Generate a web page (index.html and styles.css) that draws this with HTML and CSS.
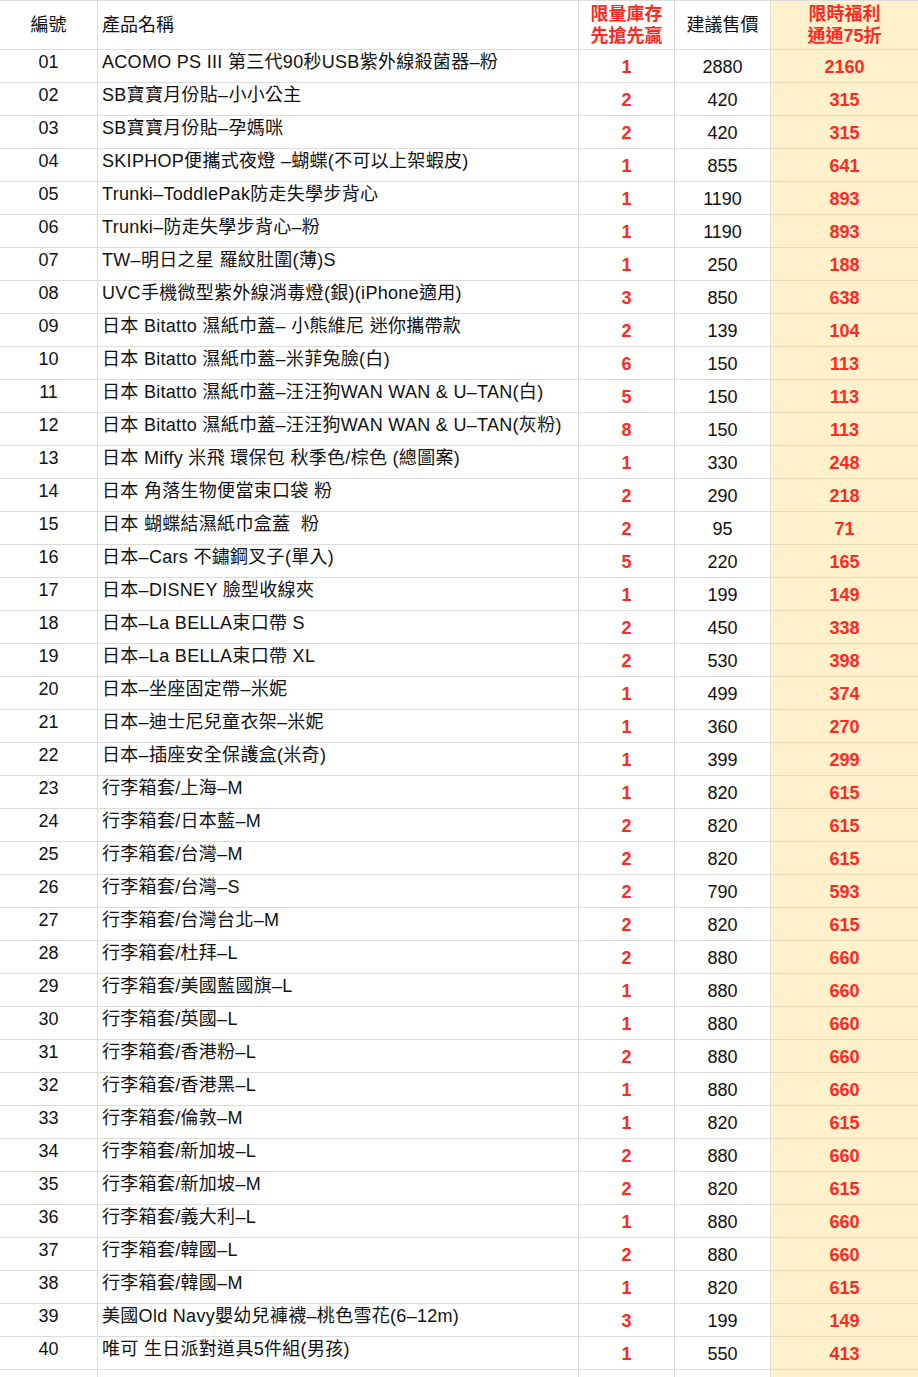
FILE: index.html
```html
<!DOCTYPE html>
<html lang="zh-Hant">
<head>
<meta charset="utf-8">
<title>限時福利</title>
<link rel="stylesheet" href="styles.css">
</head>
<body>
<div class="sheet">
  <div class="row head">
    <div class="c id">編號</div>
    <div class="c name">產品名稱</div>
    <div class="c qty hot">限量庫存<br>先搶先贏</div>
    <div class="c price">建議售價</div>
    <div class="c deal hot">限時福利<br>通通75折</div>
  </div>
  <div class="row"><div class="c id">01</div><div class="c name">ACOMO PS III 第三代90秒USB紫外線殺菌器–粉</div><div class="c qty">1</div><div class="c price">2880</div><div class="c deal">2160</div></div>
  <div class="row"><div class="c id">02</div><div class="c name">SB寶寶月份貼–小小公主</div><div class="c qty">2</div><div class="c price">420</div><div class="c deal">315</div></div>
  <div class="row"><div class="c id">03</div><div class="c name">SB寶寶月份貼–孕媽咪</div><div class="c qty">2</div><div class="c price">420</div><div class="c deal">315</div></div>
  <div class="row"><div class="c id">04</div><div class="c name">SKIPHOP便攜式夜燈 –蝴蝶(不可以上架蝦皮)</div><div class="c qty">1</div><div class="c price">855</div><div class="c deal">641</div></div>
  <div class="row"><div class="c id">05</div><div class="c name">Trunki–ToddlePak防走失學步背心</div><div class="c qty">1</div><div class="c price">1190</div><div class="c deal">893</div></div>
  <div class="row"><div class="c id">06</div><div class="c name">Trunki–防走失學步背心–粉</div><div class="c qty">1</div><div class="c price">1190</div><div class="c deal">893</div></div>
  <div class="row"><div class="c id">07</div><div class="c name">TW–明日之星 羅紋肚圍(薄)S</div><div class="c qty">1</div><div class="c price">250</div><div class="c deal">188</div></div>
  <div class="row"><div class="c id">08</div><div class="c name">UVC手機微型紫外線消毒燈(銀)(iPhone適用)</div><div class="c qty">3</div><div class="c price">850</div><div class="c deal">638</div></div>
  <div class="row"><div class="c id">09</div><div class="c name">日本 Bitatto 濕紙巾蓋– 小熊維尼 迷你攜帶款</div><div class="c qty">2</div><div class="c price">139</div><div class="c deal">104</div></div>
  <div class="row"><div class="c id">10</div><div class="c name">日本 Bitatto 濕紙巾蓋–米菲兔臉(白)</div><div class="c qty">6</div><div class="c price">150</div><div class="c deal">113</div></div>
  <div class="row"><div class="c id">11</div><div class="c name">日本 Bitatto 濕紙巾蓋–汪汪狗WAN WAN &amp; U–TAN(白)</div><div class="c qty">5</div><div class="c price">150</div><div class="c deal">113</div></div>
  <div class="row"><div class="c id">12</div><div class="c name">日本 Bitatto 濕紙巾蓋–汪汪狗WAN WAN &amp; U–TAN(灰粉)</div><div class="c qty">8</div><div class="c price">150</div><div class="c deal">113</div></div>
  <div class="row"><div class="c id">13</div><div class="c name">日本 Miffy 米飛 環保包 秋季色/棕色 (總圖案)</div><div class="c qty">1</div><div class="c price">330</div><div class="c deal">248</div></div>
  <div class="row"><div class="c id">14</div><div class="c name">日本 角落生物便當束口袋 粉</div><div class="c qty">2</div><div class="c price">290</div><div class="c deal">218</div></div>
  <div class="row"><div class="c id">15</div><div class="c name">日本 蝴蝶結濕紙巾盒蓋 &nbsp;粉</div><div class="c qty">2</div><div class="c price">95</div><div class="c deal">71</div></div>
  <div class="row"><div class="c id">16</div><div class="c name">日本–Cars 不鏽鋼叉子(單入)</div><div class="c qty">5</div><div class="c price">220</div><div class="c deal">165</div></div>
  <div class="row"><div class="c id">17</div><div class="c name">日本–DISNEY 臉型收線夾</div><div class="c qty">1</div><div class="c price">199</div><div class="c deal">149</div></div>
  <div class="row"><div class="c id">18</div><div class="c name">日本–La BELLA束口帶 S</div><div class="c qty">2</div><div class="c price">450</div><div class="c deal">338</div></div>
  <div class="row"><div class="c id">19</div><div class="c name">日本–La BELLA束口帶 XL</div><div class="c qty">2</div><div class="c price">530</div><div class="c deal">398</div></div>
  <div class="row"><div class="c id">20</div><div class="c name">日本–坐座固定帶–米妮</div><div class="c qty">1</div><div class="c price">499</div><div class="c deal">374</div></div>
  <div class="row"><div class="c id">21</div><div class="c name">日本–迪士尼兒童衣架–米妮</div><div class="c qty">1</div><div class="c price">360</div><div class="c deal">270</div></div>
  <div class="row"><div class="c id">22</div><div class="c name">日本–插座安全保護盒(米奇)</div><div class="c qty">1</div><div class="c price">399</div><div class="c deal">299</div></div>
  <div class="row"><div class="c id">23</div><div class="c name">行李箱套/上海–M</div><div class="c qty">1</div><div class="c price">820</div><div class="c deal">615</div></div>
  <div class="row"><div class="c id">24</div><div class="c name">行李箱套/日本藍–M</div><div class="c qty">2</div><div class="c price">820</div><div class="c deal">615</div></div>
  <div class="row"><div class="c id">25</div><div class="c name">行李箱套/台灣–M</div><div class="c qty">2</div><div class="c price">820</div><div class="c deal">615</div></div>
  <div class="row"><div class="c id">26</div><div class="c name">行李箱套/台灣–S</div><div class="c qty">2</div><div class="c price">790</div><div class="c deal">593</div></div>
  <div class="row"><div class="c id">27</div><div class="c name">行李箱套/台灣台北–M</div><div class="c qty">2</div><div class="c price">820</div><div class="c deal">615</div></div>
  <div class="row"><div class="c id">28</div><div class="c name">行李箱套/杜拜–L</div><div class="c qty">2</div><div class="c price">880</div><div class="c deal">660</div></div>
  <div class="row"><div class="c id">29</div><div class="c name">行李箱套/美國藍國旗–L</div><div class="c qty">1</div><div class="c price">880</div><div class="c deal">660</div></div>
  <div class="row"><div class="c id">30</div><div class="c name">行李箱套/英國–L</div><div class="c qty">1</div><div class="c price">880</div><div class="c deal">660</div></div>
  <div class="row"><div class="c id">31</div><div class="c name">行李箱套/香港粉–L</div><div class="c qty">2</div><div class="c price">880</div><div class="c deal">660</div></div>
  <div class="row"><div class="c id">32</div><div class="c name">行李箱套/香港黑–L</div><div class="c qty">1</div><div class="c price">880</div><div class="c deal">660</div></div>
  <div class="row"><div class="c id">33</div><div class="c name">行李箱套/倫敦–M</div><div class="c qty">1</div><div class="c price">820</div><div class="c deal">615</div></div>
  <div class="row"><div class="c id">34</div><div class="c name">行李箱套/新加坡–L</div><div class="c qty">2</div><div class="c price">880</div><div class="c deal">660</div></div>
  <div class="row"><div class="c id">35</div><div class="c name">行李箱套/新加坡–M</div><div class="c qty">2</div><div class="c price">820</div><div class="c deal">615</div></div>
  <div class="row"><div class="c id">36</div><div class="c name">行李箱套/義大利–L</div><div class="c qty">1</div><div class="c price">880</div><div class="c deal">660</div></div>
  <div class="row"><div class="c id">37</div><div class="c name">行李箱套/韓國–L</div><div class="c qty">2</div><div class="c price">880</div><div class="c deal">660</div></div>
  <div class="row"><div class="c id">38</div><div class="c name">行李箱套/韓國–M</div><div class="c qty">1</div><div class="c price">820</div><div class="c deal">615</div></div>
  <div class="row"><div class="c id">39</div><div class="c name">美國Old Navy嬰幼兒褲襪–桃色雪花(6–12m)</div><div class="c qty">3</div><div class="c price">199</div><div class="c deal">149</div></div>
  <div class="row"><div class="c id">40</div><div class="c name">唯可 生日派對道具5件組(男孩)</div><div class="c qty">1</div><div class="c price">550</div><div class="c deal">413</div></div>
  <div class="row tail"><div class="c id"></div><div class="c name"></div><div class="c qty"></div><div class="c price"></div><div class="c deal"></div></div>
</div>
</body>
</html>
```

FILE: styles.css
```css
* { box-sizing: border-box; }
html, body { margin: 0; padding: 0; background: #fff; }
body {
  font-family: "Liberation Sans", "Noto Sans CJK TC", sans-serif;
  font-size: 18px;
  color: #111;
}
.sheet {
  width: 918px;
  border-top: 1px solid #dcdcdc;
}
.row {
  display: grid;
  grid-template-columns: 98px 481px 96px 96px 147px;
  height: 33px;
  border-bottom: 1px solid #dcdcdc;
}
.row.head { height: 49px; }
.row.tail { height: 10px; border-bottom: none; }
.c {
  border-right: 1px solid #dcdcdc;
  line-height: 22px;
  white-space: nowrap;
  overflow: hidden;
}
.id { text-align: center; padding-top: 1px; }
.name { padding: 1px 0 0 4px; letter-spacing: 0.3px; }
.qty, .price, .deal {
  text-align: center;
  display: flex;
  align-items: flex-end;
  justify-content: center;
  padding-bottom: 4px;
}
.qty, .deal { color: #ff2a1f; font-weight: bold; }
.deal {
  background: #fff1cc;
  border-right: none;
}
.row .c.deal { margin-bottom: -1px; border-bottom: 1px solid #ecdcb2; }
.row.tail .c.deal { border-bottom: none; }
.price { border-right-color: #e6dcc4; }

.head .c { display: flex; align-items: center; padding-bottom: 0; padding-top: 0; }
.head .id { justify-content: center; }
.head .name { padding-left: 4px; letter-spacing: 0; }
.head .qty, .head .deal, .head .price { justify-content: center; text-align: center; }
.head .hot { color: #ff2a1f; font-weight: bold; line-height: 22px; }
```
